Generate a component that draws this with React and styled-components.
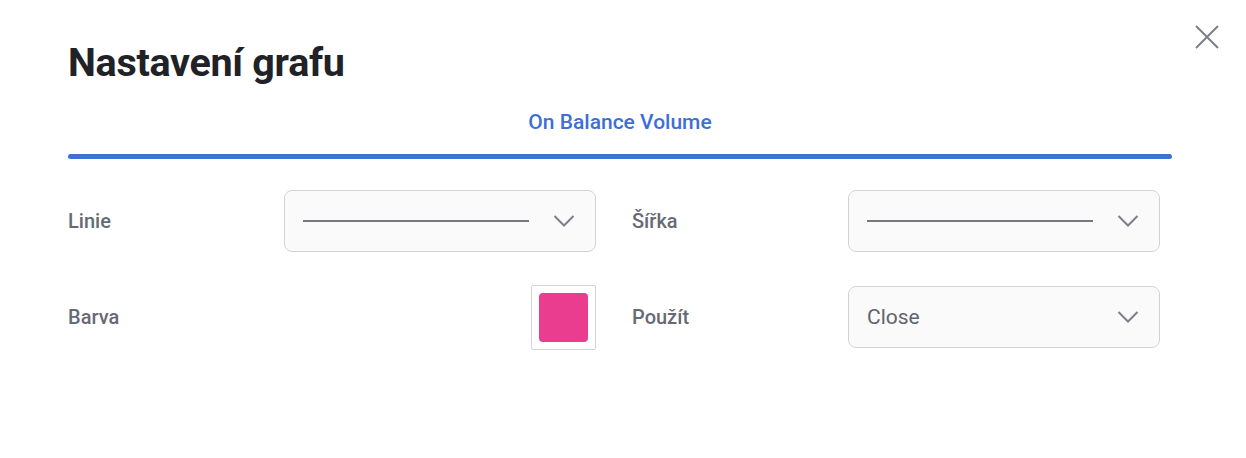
import React from 'react';
import styled, { createGlobalStyle } from 'styled-components';

const Global = createGlobalStyle`
    body{
        margin:0;
        background:#fff;
        font-family:Roboto, "Liberation Sans", sans-serif;
    }
`;

const Dialog = styled.div`
    position:relative;
    width:1246px;
    height:458px;
    box-sizing:border-box;
    padding:36px 74px 0 68px;
    background:#fff;
`;

const Title = styled.h1`
    margin:0;
    font-size:39.5px;
    line-height:54px;
    font-weight:700;
    color:#202227;
    letter-spacing:-0.3px;
`;

const CloseBtn = styled.button`
    position:absolute;
    top:22px;
    right:24px;
    width:30px;
    height:30px;
    padding:0;
    border:none;
    background:none;
    cursor:pointer;
`;

const Tabs = styled.div`
    display:flex;
    flex-direction:column;
    align-items:center;
    margin-top:20px;
    .tab{
        font-size:21px;
        font-weight:500;
        color:#3d6fd6;
        line-height:24px;
        padding-bottom:20px;
    }
    .bar{
        align-self:stretch;
        height:5px;
        border-radius:3px;
        background:#3d71d4;
    }
`;

const Form = styled.div`
    display:grid;
    grid-template-columns:528px 528px;
    column-gap:36px;
    row-gap:34px;
    margin-top:31px;
`;

const Field = styled.div`
    display:flex;
    align-items:center;
    justify-content:space-between;
    height:62px;
`;

const Label = styled.span`
    font-size:20px;
    font-weight:500;
    color:#666a75;
`;

const Select = styled.div`
    display:flex;
    align-items:center;
    box-sizing:border-box;
    width:312px;
    height:62px;
    padding:0 20px 0 18px;
    border:1px solid #d2d3d8;
    border-radius:8px;
    background:#fafafa;
    .value{
        flex:1;
        font-size:21px;
        color:#5f636d;
    }
    .line{
        width:226px;
        height:2px;
        background:#77787c;
        margin-right:auto;
    }
`;

const Swatch = styled.div`
    box-sizing:border-box;
    width:65px;
    height:65px;
    padding:7px;
    border:1px solid #d2d3d8;
    border-radius:2px;
    background:#fff;
    .fill{
        width:100%;
        height:100%;
        border-radius:4px;
        background:${p => p.color};
    }
`;

const Chevron = () => (
    <svg width="22" height="14" viewBox="0 0 22 14" fill="none">
        <path d="M1.5 2L11 11.5L20.5 2" stroke="#7b7f89" strokeWidth="2" />
    </svg>
);

const LineSelect = () => (
    <Select>
        <div className="line" />
        <Chevron />
    </Select>
);

const App = () => {
    return <Dialog>
        <Global />
        <CloseBtn aria-label="close">
            <svg width="30" height="30" viewBox="0 0 30 30">
                <path d="M4 4L26 26M26 4L4 26" stroke="#7b7f89" strokeWidth="2" />
            </svg>
        </CloseBtn>
        <Title>Nastavení grafu</Title>
        <Tabs>
            <div className="tab">On Balance Volume</div>
            <div className="bar" />
        </Tabs>
        <Form>
            <Field>
                <Label>Linie</Label>
                <LineSelect />
            </Field>
            <Field>
                <Label>Šířka</Label>
                <LineSelect />
            </Field>
            <Field>
                <Label>Barva</Label>
                <Swatch color="#ea3d8f"><div className="fill" /></Swatch>
            </Field>
            <Field>
                <Label>Použít</Label>
                <Select>
                    <span className="value">Close</span>
                    <Chevron />
                </Select>
            </Field>
        </Form>
    </Dialog>
}

export default App;
